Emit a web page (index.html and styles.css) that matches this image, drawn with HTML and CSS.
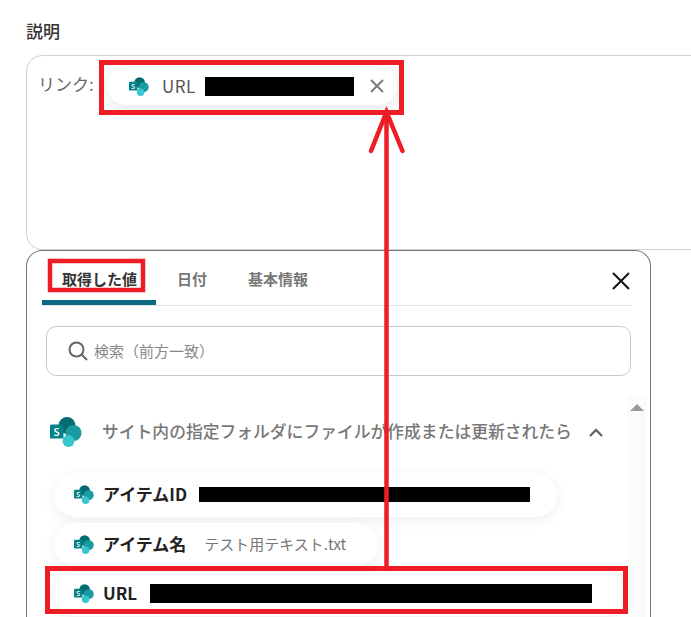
FILE: index.html
```html
<!DOCTYPE html>
<html lang="ja">
<head>
<meta charset="utf-8">
<title>説明</title>
<link rel="stylesheet" href="styles.css">
</head>
<body>
<main class="page">
  <h2 class="label">説明</h2>
  <section class="editor">
    <span class="editor-text">リンク:</span>
    <div class="chip">
      <svg class="chip-icon" viewBox="0 0 32 30">
        <circle cx="17" cy="8.5" r="8.5" fill="#036c70"/>
        <circle cx="23.5" cy="16" r="8" fill="#1a9ba1"/>
        <circle cx="18.5" cy="24" r="6" fill="#37c6d0"/>
        <rect x="0" y="7.5" width="13.5" height="14" rx="1.2" fill="#038387"/>
        <text x="3.5" y="18.5" class="sp-letter">S</text>
      </svg>
      <span class="chip-name">URL</span>
      <span class="redact chip-redact"></span>
      <svg class="chip-x" viewBox="0 0 14 14"><path d="M1 1 13 13M13 1 1 13"/></svg>
    </div>
  </section>
  <section class="popup">
    <header class="tabs">
      <div class="tab tab-active">取得した値</div>
      <div class="tab">日付</div>
      <div class="tab tab-info">基本情報</div>
      <svg class="close" viewBox="0 0 18 18"><path d="M1 1 17 17M17 1 1 17"/></svg>
    </header>
    <div class="search">
      <svg class="search-icon" viewBox="0 0 20 20"><circle cx="8.5" cy="8.5" r="7"/><path d="M13.5 13.5 19 19"/></svg>
      <span class="placeholder">検索（前方一致）</span>
    </div>
    <div class="scroller">
      <div class="list">
        <div class="group">
          <svg class="group-icon" viewBox="0 0 32 30">
            <circle cx="17" cy="8.5" r="8.5" fill="#036c70"/>
            <circle cx="23.5" cy="16" r="8" fill="#1a9ba1"/>
            <circle cx="18.5" cy="24" r="6" fill="#37c6d0"/>
            <rect x="0" y="7.5" width="13.5" height="14" rx="1.2" fill="#038387"/>
            <text x="3.5" y="18.5" class="sp-letter">S</text>
          </svg>
          <span class="group-title">サイト内の指定フォルダにファイルが作成または更新されたら</span>
          <svg class="chevron" viewBox="0 0 14 9"><path d="M1 8 7 2 13 8"/></svg>
        </div>
        <div class="items">
          <div class="item item-id">
            <svg class="item-icon" viewBox="0 0 32 30">
              <circle cx="17" cy="8.5" r="8.5" fill="#036c70"/>
              <circle cx="23.5" cy="16" r="8" fill="#1a9ba1"/>
              <circle cx="18.5" cy="24" r="6" fill="#37c6d0"/>
              <rect x="0" y="7.5" width="13.5" height="14" rx="1.2" fill="#038387"/>
              <text x="3.5" y="18.5" class="sp-letter">S</text>
            </svg>
            <span class="item-name">アイテムID</span>
            <span class="redact id-redact"></span>
          </div>
          <div class="item item-file">
            <svg class="item-icon" viewBox="0 0 32 30">
              <circle cx="17" cy="8.5" r="8.5" fill="#036c70"/>
              <circle cx="23.5" cy="16" r="8" fill="#1a9ba1"/>
              <circle cx="18.5" cy="24" r="6" fill="#37c6d0"/>
              <rect x="0" y="7.5" width="13.5" height="14" rx="1.2" fill="#038387"/>
              <text x="3.5" y="18.5" class="sp-letter">S</text>
            </svg>
            <span class="item-name">アイテム名</span>
            <span class="item-value">テスト用テキスト.txt</span>
          </div>
          <div class="item item-url">
            <svg class="item-icon" viewBox="0 0 32 30">
              <circle cx="17" cy="8.5" r="8.5" fill="#036c70"/>
              <circle cx="23.5" cy="16" r="8" fill="#1a9ba1"/>
              <circle cx="18.5" cy="24" r="6" fill="#37c6d0"/>
              <rect x="0" y="7.5" width="13.5" height="14" rx="1.2" fill="#038387"/>
              <text x="3.5" y="18.5" class="sp-letter">S</text>
            </svg>
            <span class="item-name">URL</span>
            <span class="redact url-redact"></span>
          </div>
        </div>
      </div>
      <div class="scrollbar"><span class="scroll-up"></span></div>
    </div>
  </section>
</main>
<svg class="marks" width="691" height="617" viewBox="0 0 691 617" aria-hidden="true">
  <rect x="101.5" y="62.5" width="300" height="50"/>
  <rect class="mark-thin" x="50" y="261" width="93" height="29"/>
  <rect x="47.5" y="568.5" width="578" height="43"/>
  <path class="mark-line" d="M386.5 113V568"/>
  <path class="mark-line" d="M371 151 386.5 112 402.5 151"/>
</svg>
</body>
</html>
```

FILE: styles.css
```css
* { box-sizing: border-box; }
html, body {
  margin: 0;
  width: 691px;
  height: 617px;
  overflow: hidden;
  background: #fff;
}
body {
  position: relative;
  font-family: "Noto Sans CJK JP", "Noto Sans", sans-serif;
  color: #333;
}
.sp-letter {
  font: 600 11px "Open Sans", "Noto Sans", sans-serif;
  fill: #fff;
}
.page {
  width: 691px;
  height: 617px;
  padding: 19px 0 0 26px;
  overflow: hidden;
}
.label {
  margin: 0 0 12px;
  font-size: 17px;
  line-height: 24px;
  font-weight: 500;
  color: #333;
}
.editor {
  display: flex;
  align-items: flex-start;
  width: 720px;
  height: 195px;
  padding: 11px 0 0 11px;
  border: 1px solid #cfcfd4;
  border-radius: 16px;
  background: #fff;
}
.editor-text {
  width: 54px;
  margin-top: 3px;
  font-size: 17px;
  line-height: 28px;
  white-space: nowrap;
  color: #666;
}
.chip {
  display: flex;
  align-items: center;
  width: 290px;
  height: 38px;
  margin-left: 15px;
  padding-left: 22px;
  border-radius: 19px;
  background: #fff;
  box-shadow: 0 4px 14px rgba(0, 0, 0, 0.09);
}
.chip-icon { width: 20px; height: 19px; }
.chip-name {
  width: 43px;
  margin-left: 13px;
  margin-bottom: 2px;
  font-size: 17px;
  letter-spacing: 0.5px;
  color: #555;
}
.redact { display: block; background: #000; }
.chip-redact { width: 149px; height: 19px; }
.chip-x {
  width: 14px;
  height: 14px;
  margin-left: 16px;
  fill: none;
  stroke: #777;
  stroke-width: 1.8;
}
.popup {
  width: 625px;
  height: 420px;
  border: 1px solid #777;
  border-bottom: 0;
  border-radius: 16px 16px 0 0;
  background: #fff;
  overflow: hidden;
}
.tabs {
  display: flex;
  align-items: flex-start;
  height: 55px;
  margin: 0 19px 0 15px;
  border-bottom: 1px solid #e4e4e4;
}
.tab {
  height: 54px;
  padding: 17px 20px 0;
  font-size: 15px;
  line-height: 22px;
  font-weight: 700;
  color: #777;
  border-bottom: 5px solid transparent;
}
.tab-active {
  width: 114px;
  padding-right: 0;
  white-space: nowrap;
  color: #333;
  border-bottom-color: #0b6a82;
  border-radius: 6px 6px 0 0;
}
.tab-active + .tab { margin-left: 1px; }
.tab-info { margin-left: 1px; }
.close {
  width: 18px;
  height: 18px;
  margin: 21px 1px 0 auto;
  fill: none;
  stroke: #111;
  stroke-width: 2;
}
.search {
  display: flex;
  align-items: center;
  width: 585px;
  height: 50px;
  margin: 20px 0 20px 19px;
  padding-left: 21px;
  border: 1px solid #c8c8c8;
  border-radius: 10px;
}
.search-icon {
  width: 20px;
  height: 20px;
  fill: none;
  stroke: #666;
  stroke-width: 2;
}
.placeholder {
  margin-left: 6px;
  margin-bottom: 2px;
  font-size: 15px;
  color: #888;
}
.scroller {
  display: flex;
  margin-left: 19px;
}
.list {
  width: 581px;
  padding-top: 21px;
}
.group {
  display: flex;
  align-items: center;
  height: 30px;
  padding-left: 4px;
}
.group-icon { width: 32px; height: 30px; }
.group-title {
  width: 487px;
  margin-left: 20px;
  margin-bottom: 2px;
  font-size: 16.8px;
  font-weight: 500;
  white-space: nowrap;
  color: #777;
}
.chevron {
  width: 14px;
  height: 9px;
  fill: none;
  stroke: #666;
  stroke-width: 2.4;
}
.items {
  display: flex;
  flex-direction: column;
  gap: 6px;
  margin: 26px 0 0 8px;
}
.item {
  display: flex;
  align-items: center;
  height: 43.5px;
  padding-left: 20px;
  border-radius: 22px;
  background: #fff;
  box-shadow: 0 3px 14px rgba(0, 0, 0, 0.07);
}
.item-id { width: 503px; }
.item-file { width: 324px; }
.item-url { width: 571px; }
.item-icon { width: 20px; height: 19px; }
.item-name {
  margin-left: 9px;
  margin-bottom: 2px;
  font-size: 17px;
  font-weight: 700;
  white-space: nowrap;
  color: #222;
}
.item-value {
  margin-left: 18px;
  margin-bottom: 2px;
  font-size: 15px;
  white-space: nowrap;
  color: #777;
}
.id-redact { width: 331px; height: 15px; margin-left: 12px; }
.url-redact { width: 442px; height: 19px; margin-left: 13px; }
.scrollbar {
  width: 19px;
  height: 230px;
  padding: 8px 0 0 3px;
  background: #fbfbfb;
}
.scroll-up {
  display: block;
  width: 0;
  height: 0;
  border-left: 7px solid transparent;
  border-right: 7px solid transparent;
  border-bottom: 7px solid #999;
}
.marks {
  position: absolute;
  left: 0;
  top: 0;
  fill: none;
  stroke: #ee1c25;
  stroke-width: 5;
}
.mark-thin { stroke-width: 4.5; }
.mark-line {
  stroke-width: 4.5;
  stroke-linecap: round;
}
```
